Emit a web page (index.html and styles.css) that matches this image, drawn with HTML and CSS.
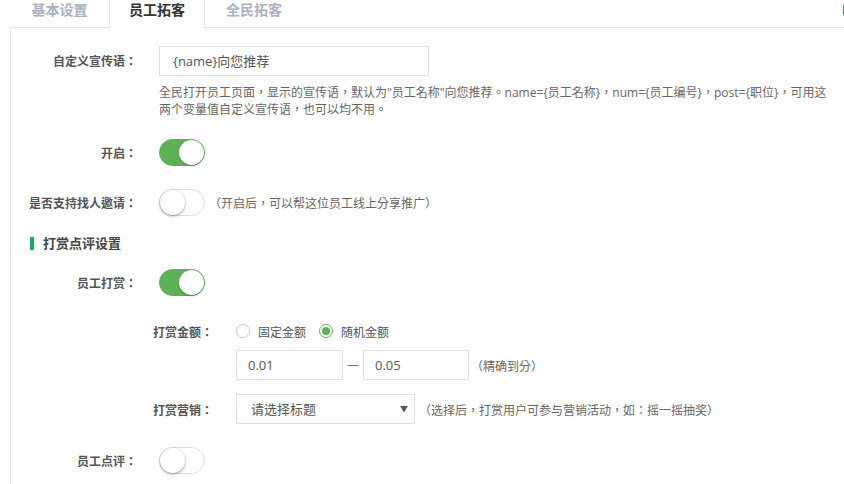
FILE: index.html
```html
<!DOCTYPE html>
<html>
<head>
<meta charset="utf-8">
<title>员工拓客</title>
<link rel="stylesheet" href="styles.css">
</head>
<body>
<div class="tabs">
  <div class="tab">基本设置</div>
  <div class="tab active">员工拓客</div>
  <div class="tab">全民拓客</div>
  <span class="corner"></span>
</div>
<div class="panel">
  <div class="row row-top">
    <div class="lbl lbl-tall">自定义宣传语：</div>
    <div class="ctl">
      <div class="field field-slogan">{name}向您推荐</div>
      <p class="help">全民打开员工页面，显示的宣传语，默认为"员工名称"向您推荐。name={员工名称}，num={员工编号}，post={职位}，可用这<br>两个变量值自定义宣传语，也可以均不用。</p>
    </div>
  </div>

  <div class="row row-open">
    <div class="lbl">开启：</div>
    <div class="ctl"><span class="switch on"><span class="knob"></span></span></div>
  </div>

  <div class="row row-invite">
    <div class="lbl">是否支持找人邀请：</div>
    <div class="ctl"><span class="switch"><span class="knob"></span></span><span class="hint hint-invite">（开启后，可以帮这位员工线上分享推广）</span></div>
  </div>

  <div class="section-title"><span class="bar"></span>打赏点评设置</div>

  <div class="row row-reward">
    <div class="lbl">员工打赏：</div>
    <div class="ctl"><span class="switch on"><span class="knob"></span></span></div>
  </div>

  <div class="sub">
    <div class="sub-row sub-amount">
      <div class="sub-lbl">打赏金额：</div>
      <div class="ctl">
        <span class="radio"></span><span class="radio-text">固定金额</span>
        <span class="radio checked"></span><span class="radio-text">随机金额</span>
      </div>
    </div>
    <div class="sub-row sub-range">
      <div class="sub-lbl"></div>
      <div class="ctl">
        <div class="field field-num">0.01</div>
        <span class="dash">一</span>
        <div class="field field-num field-num2">0.05</div>
        <span class="hint hint-range">（精确到分）</span>
      </div>
    </div>
    <div class="sub-row sub-market">
      <div class="sub-lbl">打赏营销：</div>
      <div class="ctl">
        <div class="field field-select"><span>请选择标题</span><span class="arrow">▼</span></div>
        <span class="hint hint-market">（选择后，打赏用户可参与营销活动，如：摇一摇抽奖）</span>
      </div>
    </div>
  </div>

  <div class="row row-comment">
    <div class="lbl">员工点评：</div>
    <div class="ctl"><span class="switch"><span class="knob"></span></span></div>
  </div>
</div>
</body>
</html>
```

FILE: styles.css
```css
html, body {
  margin: 0;
  padding: 0;
  overflow: hidden;
  background: #ffffff;
}
body {
  font-family: "Open Sans", "Noto Sans CJK TC", sans-serif;
  font-size: 12px;
  color: #555;
  width: 844px;
  height: 484px;
}

/* tabs */
.tabs {
  display: flex;
  align-items: stretch;
  margin-left: 10px;
  height: 27px;
  border-bottom: 1px solid #e5e5e5;
}
.tab {
  width: 96px;
  text-align: center;
  font-family: "Noto Sans CJK SC", sans-serif;
  font-size: 14px;
  font-weight: bold;
  line-height: 16px;
  padding-top: 1px;
  color: #aab1c0;
  border: 1px solid transparent;
  border-top: 0;
  margin-bottom: -1px;
}
.tab:first-child {
  width: 97px;
}
.tab.active {
  color: #333;
  background: #fff;
  border-color: #e5e5e5;
  border-bottom-color: #fff;
  width: 94px;
}
.corner {
  margin-left: auto;
  margin-right: -10px;
  margin-top: 4px;
  width: 9px;
  height: 10px;
  border: 1.5px solid #2a8fd8;
  border-radius: 2px;
  background: #e8f3fc;
}

/* panel */
.panel {
  margin-left: 10px;
  border-left: 1px solid #e5e5e5;
  padding-top: 18px;
  height: 460px;
}
.row {
  display: flex;
  align-items: center;
}
.row-top {
  align-items: flex-start;
}
.lbl {
  width: 126px;
  margin-right: 22px;
  text-align: right;
  font-family: "Noto Sans CJK TC", sans-serif;
  font-feature-settings: "locl" 0;
  font-weight: bold;
  font-size: 12px;
  color: #555;
  line-height: 27px;
  white-space: nowrap;
}
.lbl-tall {
  line-height: 30px;
}
.ctl {
  display: flex;
  align-items: center;
  flex-wrap: nowrap;
}
.row-top .ctl {
  display: block;
}

.field {
  box-sizing: border-box;
  border: 1px solid #e0e0e0;
  height: 30px;
  line-height: 28px;
  font-size: 13px;
  color: #555;
  background: #fff;
  white-space: nowrap;
}
.field-slogan {
  width: 270px;
  padding-left: 13px;
}
.help {
  margin: 8px 0 0 0;
  font-family: "Open Sans", "Noto Sans CJK TC", sans-serif;
  font-feature-settings: "locl" 0;
  font-size: 12px;
  line-height: 17px;
  color: #666;
  white-space: nowrap;
}

.row-open { margin-top: 21px; }
.row-invite { margin-top: 23px; }
.row-reward { margin-top: 18px; }
.row-comment { margin-top: 23px; }

/* switch */
.switch {
  box-sizing: border-box;
  display: flex;
  align-items: center;
  width: 46px;
  height: 27px;
  border-radius: 14px;
  border: 1px solid #dfdfdf;
  background: #fff;
  padding: 0;
}
.switch .knob {
  width: 25px;
  height: 25px;
  border-radius: 50%;
  background: #fff;
  box-shadow: 0 1px 3px rgba(0, 0, 0, 0.4);
}
.switch.on {
  background: #5fb157;
  border-color: #5fb157;
  justify-content: flex-end;
}
.switch.on .knob {
  box-shadow: 0 1px 2px rgba(0, 0, 0, 0.3);
}

.hint {
  font-family: "Noto Sans CJK TC", sans-serif;
  font-feature-settings: "locl" 0;
  font-size: 12px;
  color: #666;
  white-space: nowrap;
}
.hint-invite { margin-left: 4px; }
.hint-range { margin-left: 2px; }
.hint-market { margin-left: 4px; }

/* section */
.section-title {
  display: flex;
  align-items: center;
  margin-top: 19px;
  margin-left: 19px;
  line-height: 16px;
  font-family: "Noto Sans CJK SC", sans-serif;
  font-size: 13px;
  font-weight: bold;
  color: #444;
}
.section-title .bar {
  width: 4px;
  height: 13px;
  background: #11b259;
  margin-right: 9px;
}

/* sub group */
.sub {
  margin-left: 126px;
}
.sub-row {
  display: flex;
  align-items: center;
}
.sub-lbl {
  width: 76px;
  margin-right: 23px;
  text-align: right;
  font-family: "Noto Sans CJK TC", sans-serif;
  font-feature-settings: "locl" 0;
  font-weight: bold;
  font-size: 12px;
  color: #555;
  white-space: nowrap;
}
.sub-amount { margin-top: 25px; height: 20px; }
.sub-range { margin-top: 9px; }
.sub-market { margin-top: 14px; }

.radio {
  box-sizing: border-box;
  width: 14px;
  height: 14px;
  border-radius: 50%;
  border: 1px solid #c8c8c8;
  background: #fff;
  margin-right: 8px;
  display: flex;
  align-items: center;
  justify-content: center;
}
.radio.checked {
  border-color: #5fb157;
}
.radio.checked::after {
  content: "";
  width: 8px;
  height: 8px;
  border-radius: 50%;
  background: #5fb157;
}
.radio-text {
  font-family: "Noto Sans CJK SC", sans-serif;
  font-size: 12px;
  color: #555;
  margin-right: 13px;
}

.field-num {
  width: 107px;
  padding-left: 11px;
}
.field-num2 {
  width: 106px;
}
.dash {
  font-family: "Noto Sans CJK SC", sans-serif;
  font-size: 12px;
  color: #777;
  margin: 0 4px 0 4px;
}
.field-select {
  width: 179px;
  padding: 0 6px 0 14px;
  display: flex;
  justify-content: space-between;
  align-items: center;
  font-family: "Noto Sans CJK SC", sans-serif;
}
.arrow {
  font-size: 8px;
  color: #555;
  line-height: 10px;
}
```
